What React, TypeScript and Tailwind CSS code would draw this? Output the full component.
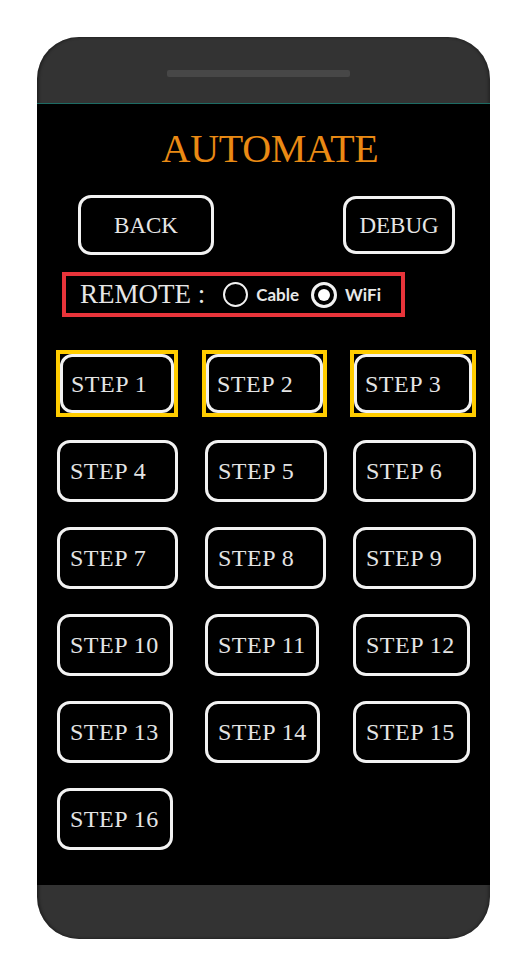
import React from "react";

const serif = { fontFamily: '"Liberation Serif", "Times New Roman", serif' } as React.CSSProperties;
const hand = { fontFamily: '"Comic Sans MS", Lato, sans-serif' } as React.CSSProperties;

function StepBtn({ label, w, h = 62 }: { label: string; w: number; h?: number }) {
  return (
    <div
      className="box-border flex items-center rounded-[13px] border-[3px] border-[#f2f2f2] bg-black pl-[10px] text-[24px] leading-none tracking-[0.5px] text-[#e4e4e4]"
      style={{ ...serif, width: w, height: h }}
    >
      {label}
    </div>
  );
}

function YellowStep({ label, w }: { label: string; w: number }) {
  return (
    <div
      className="box-border h-[67px] border-[4px] border-[#ffcc00] bg-black"
      style={{ width: w }}
    >
      <div
        className="box-border flex h-full w-full items-center rounded-[12px] border-[3px] border-[#f2f2f2] bg-black pl-[8px] text-[24px] leading-none tracking-[0.5px] text-[#e4e4e4]"
        style={serif}
      >
        {label}
      </div>
    </div>
  );
}

const rows: { label: string; w: number }[][] = [
  [
    { label: "STEP 4", w: 121 },
    { label: "STEP 5", w: 122 },
    { label: "STEP 6", w: 123 },
  ],
  [
    { label: "STEP 7", w: 121 },
    { label: "STEP 8", w: 121 },
    { label: "STEP 9", w: 123 },
  ],
  [
    { label: "STEP 10", w: 116 },
    { label: "STEP 11", w: 114 },
    { label: "STEP 12", w: 117 },
  ],
  [
    { label: "STEP 13", w: 116 },
    { label: "STEP 14", w: 115 },
    { label: "STEP 15", w: 117 },
  ],
  [{ label: "STEP 16", w: 116 }],
];

export default function App() {
  return (
    <div className="min-h-[968px] w-[520px] bg-white pl-[37px] pt-[37px]">
      <div className="flex h-[902px] w-[453px] flex-col overflow-hidden rounded-[42px] bg-[#333333] shadow-[inset_2px_0_3px_rgba(0,0,0,0.35),inset_-2px_0_3px_rgba(0,0,0,0.25)]">
        {/* top bezel */}
        <div className="h-[66px] shrink-0 pl-[130px] pt-[33px]">
          <div className="h-[7px] w-[183px] rounded-[2px] bg-[#474747]" />
        </div>
        <div className="h-[1px] shrink-0 bg-[#1d6b63]" />
        {/* screen */}
        <div className="flex h-[781px] shrink-0 flex-col bg-black">
          <div
            className="mt-[25px] h-[40px] pl-[13px] text-center text-[40px] leading-[40px] tracking-[-0.3px] text-[#ea8a14]"
            style={serif}
          >
            AUTOMATE
          </div>

          <div className="mt-[26px] flex h-[60px] items-center pl-[41px] pr-[35px]">
            <div
              className="box-border flex h-[60px] w-[136px] items-center justify-center rounded-[13px] border-[3px] border-[#f2f2f2] text-[23px] leading-none text-[#e6e6e6]"
              style={serif}
            >
              BACK
            </div>
            <div
              className="ml-auto box-border flex h-[58px] w-[112px] items-center justify-center rounded-[13px] border-[3px] border-[#f2f2f2] text-[23px] leading-none text-[#e6e6e6]"
              style={serif}
            >
              DEBUG
            </div>
          </div>

          <div className="ml-[25px] mt-[17px] box-border flex h-[45px] w-[343px] items-center border-[4px] border-[#e8343a] pl-[14px]">
            <span className="text-[27px] leading-none text-[#e6e6e6]" style={serif}>
              REMOTE :
            </span>
            <div className="ml-[18px] box-border h-[25px] w-[25px] shrink-0 rounded-full border-[2.5px] border-[#f2f2f2]" />
            <span className="ml-[8px] text-[17px] font-bold leading-none text-[#e8e8e8]" style={hand}>
              Cable
            </span>
            <div className="ml-[12px] box-border flex h-[26px] w-[26px] shrink-0 items-center justify-center rounded-full border-[3px] border-[#f2f2f2]">
              <div className="h-[12px] w-[12px] rounded-full bg-white" />
            </div>
            <span className="ml-[8px] text-[17px] font-bold leading-none text-[#e8e8e8]" style={hand}>
              WiFi
            </span>
          </div>

          <div className="mt-[33px] flex flex-col">
            <div className="grid grid-cols-[147px_148px_auto] pl-[19px]">
              <YellowStep label="STEP 1" w={122} />
              <div className="-ml-[1px]">
                <YellowStep label="STEP 2" w={125} />
              </div>
              <div className="-ml-[1px]">
                <YellowStep label="STEP 3" w={126} />
              </div>
            </div>
            <div className="mt-[23px] flex flex-col gap-[25px]">
              {rows.map((row, i) => (
                <div key={i} className="grid grid-cols-[148px_148px_auto] pl-[20px]">
                  {row.map((s) => (
                    <StepBtn key={s.label} label={s.label} w={s.w} />
                  ))}
                </div>
              ))}
            </div>
          </div>
        </div>
        {/* bottom bezel */}
        <div className="flex-1" />
      </div>
    </div>
  );
}
